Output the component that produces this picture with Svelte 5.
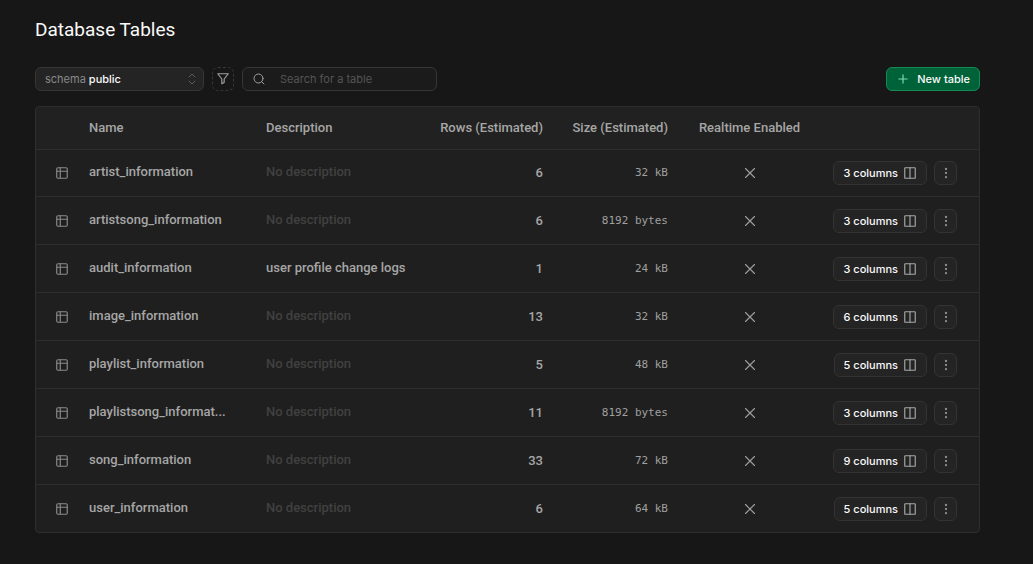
<script>
  let search = $state('');
  const tables = [
    { name: 'artist_information', description: '', rows: 6, size: '32 kB', columns: 3 },
    { name: 'artistsong_information', description: '', rows: 6, size: '8192 bytes', columns: 3 },
    { name: 'audit_information', description: 'user profile change logs', rows: 1, size: '24 kB', columns: 3 },
    { name: 'image_information', description: '', rows: 13, size: '32 kB', columns: 6 },
    { name: 'playlist_information', description: '', rows: 5, size: '48 kB', columns: 5 },
    { name: 'playlistsong_information', description: '', rows: 11, size: '8192 bytes', columns: 3 },
    { name: 'song_information', description: '', rows: 33, size: '72 kB', columns: 9 },
    { name: 'user_information', description: '', rows: 6, size: '64 kB', columns: 5 }
  ];
  const visible = $derived(tables.filter((t) => t.name.includes(search.toLowerCase())));
  const shorten = (name) => (name.length > 22 ? name.slice(0, 21) + '...' : name);
</script>

<main>
  <h1>Database Tables</h1>

  <div class="toolbar">
    <div class="schema">
      <label for="schema">schema</label>
      <select id="schema">
        <option>public</option>
      </select>
      <svg class="chevrons" width="12" height="12" viewBox="0 0 24 24" aria-hidden="true">
        <path d="m6 8 6-6 6 6M6 16l6 6 6-6" />
      </svg>
    </div>
    <button class="filter" aria-label="Filter">
      <svg width="14" height="14" viewBox="0 0 24 24" aria-hidden="true">
        <path d="M21 3H3l7 9v8l4-2v-6z" />
      </svg>
    </button>
    <div class="search">
      <svg width="12" height="12" viewBox="0 0 24 24" aria-hidden="true">
        <circle cx="11" cy="11" r="9" />
        <path d="m22 22-4.5-4.5" />
      </svg>
      <input type="text" aria-label="Search for a table" placeholder="Search for a table" bind:value={search} />
    </div>
    <button class="new">
      <svg width="14" height="14" viewBox="0 0 24 24" aria-hidden="true">
        <path d="M5 12h14M12 5v14" />
      </svg>
      New table
    </button>
  </div>

  <div class="card">
    <table>
      <colgroup>
        <col class="c-icon" />
        <col class="c-name" />
        <col />
        <col class="c-rows" />
        <col class="c-size" />
        <col class="c-realtime" />
        <col class="c-actions" />
      </colgroup>
      <thead>
        <tr>
          <th></th>
          <th>Name</th>
          <th>Description</th>
          <th class="right">Rows (Estimated)</th>
          <th class="right">Size (Estimated)</th>
          <th class="center">Realtime Enabled</th>
          <th></th>
        </tr>
      </thead>
      <tbody>
        {#each visible as table (table.name)}
          <tr>
            <td class="icon">
              <svg width="14" height="14" viewBox="0 0 24 24" aria-hidden="true">
                <rect x="3" y="3" width="18" height="18" rx="2" />
                <path d="M3 9h18M9 3v18" />
              </svg>
            </td>
            <td class="text" title={table.name}>{shorten(table.name)}</td>
            <td class="text" class:muted={!table.description}>{table.description || 'No description'}</td>
            <td class="right">{table.rows}</td>
            <td class="right size">{table.size}</td>
            <td class="center realtime">
              <svg width="18" height="18" viewBox="0 0 24 24" role="img" aria-label="Disabled">
                <path d="M18 6 6 18M6 6l12 12" />
              </svg>
            </td>
            <td class="actions">
              <div>
                <button class="columns">
                  {table.columns} columns
                  <svg width="14" height="14" viewBox="0 0 24 24" aria-hidden="true">
                    <rect x="3" y="3" width="18" height="18" rx="1" />
                    <path d="M12 3v18" />
                  </svg>
                </button>
                <button class="more" aria-label="More actions">
                  <svg width="14" height="14" viewBox="0 0 24 24" aria-hidden="true">
                    <circle cx="12" cy="5" r="1" />
                    <circle cx="12" cy="12" r="1" />
                    <circle cx="12" cy="19" r="1" />
                  </svg>
                </button>
              </div>
            </td>
          </tr>
        {/each}
      </tbody>
    </table>
  </div>
</main>

<style>
  :global(body) {
    background: #171717;
  }

  main {
    box-sizing: border-box;
    padding: 16px 53px 28px 35px;
    color: #a6a6a6;
    font: 500 13px/20px Roboto, Inter, sans-serif;
  }

  h1 {
    margin: 0 0 23px;
    color: #fafafa;
    font-size: 19px;
    font-weight: 400;
    line-height: 28px;
  }

  button,
  input,
  select {
    margin: 0;
    padding: 0;
    border: 0;
    background: none;
    color: inherit;
    font: inherit;
  }

  button {
    cursor: pointer;
  }

  svg {
    display: block;
    flex: none;
    fill: none;
    stroke: currentColor;
    stroke-width: 2;
    stroke-linecap: round;
    stroke-linejoin: round;
  }

  .toolbar {
    display: flex;
    gap: 8px;
    margin-bottom: 15px;
    font-family: Inter, sans-serif;
    font-size: 11px;
    font-weight: 400;
    line-height: 16px;
  }

  .toolbar > * {
    box-sizing: border-box;
    height: 24px;
    border: 1px solid #363636;
    border-radius: 6px;
  }

  .schema {
    position: relative;
    display: flex;
    align-items: center;
    gap: 3px;
    width: 169px;
    padding-left: 9px;
    background: #242424;
    color: #898989;
  }

  .schema select {
    flex: 1;
    height: 22px;
    appearance: none;
    color: #fafafa;
    font-weight: 500;
  }

  .schema option {
    background: #242424;
  }

  .chevrons {
    position: absolute;
    right: 5px;
    color: #5c5c5c;
    pointer-events: none;
  }

  .toolbar .filter {
    display: grid;
    place-items: center;
    width: 22px;
    border-style: dashed;
    color: #a0a0a0;
  }

  .search {
    display: flex;
    align-items: center;
    gap: 15px;
    width: 195px;
    padding: 0 10px;
    background: #1b1b1b;
    color: #a0a0a0;
  }

  .search input {
    flex: 1;
    min-width: 0;
    outline: none;
    color: #fafafa;
  }

  .search input::placeholder {
    color: #555;
    opacity: 1;
  }

  .toolbar .new {
    display: flex;
    align-items: center;
    gap: 7px;
    margin-left: auto;
    padding: 0 9px;
    border-color: #158a55;
    background: #006239;
    color: #fafafa;
    font-weight: 500;
  }

  .new svg {
    color: #7fd9ae;
  }

  .card {
    overflow: hidden;
    border: 1px solid #2e2e2e;
    border-radius: 4px;
    background: #1f1f1f;
  }

  table {
    width: 100%;
    border-collapse: collapse;
    table-layout: fixed;
  }

  .c-icon {
    width: 37px;
  }

  .c-name {
    width: 177px;
  }

  .c-rows {
    width: 133px;
  }

  .c-size {
    width: 125px;
  }

  .c-realtime {
    width: 131px;
  }

  .c-actions {
    width: 164px;
  }

  th,
  td {
    padding: 0 16px;
    text-align: left;
    white-space: nowrap;
  }

  th {
    height: 42px;
    background: #212121;
    font-weight: 500;
  }

  td {
    height: 47px;
    border-top: 1px solid #2e2e2e;
  }

  tr:first-child td {
    height: 46px;
  }

  .text {
    box-sizing: border-box;
    padding-bottom: 2px;
  }

  .icon {
    padding: 0 0 0 19px;
    color: #8a8a8a;
  }

  .muted {
    color: #414141;
  }

  .right {
    padding-left: 0;
    text-align: right;
  }

  .center {
    padding: 0;
    text-align: center;
  }

  .size {
    color: #a0a0a0;
    font-family: "DejaVu Sans Mono", monospace;
    font-size: 11px;
    font-weight: 400;
  }

  .realtime svg {
    margin: 0 auto;
    color: #a0a0a0;
    stroke-width: 1.5;
  }

  .actions {
    padding-right: 22px;
  }

  .actions div {
    display: flex;
    justify-content: flex-end;
    gap: 7px;
  }

  .columns,
  .more {
    display: flex;
    align-items: center;
    box-sizing: border-box;
    height: 24px;
    border: 1px solid #333;
    border-radius: 6px;
    background: #242424;
  }

  .columns {
    gap: 5px;
    padding: 0 9px;
    color: #fafafa;
    font-family: Inter, sans-serif;
    font-size: 11px;
    font-weight: 500;
  }

  .columns svg {
    color: #a6a6a6;
  }

  .more {
    justify-content: center;
    width: 23px;
    color: #8a8a8a;
  }
</style>
